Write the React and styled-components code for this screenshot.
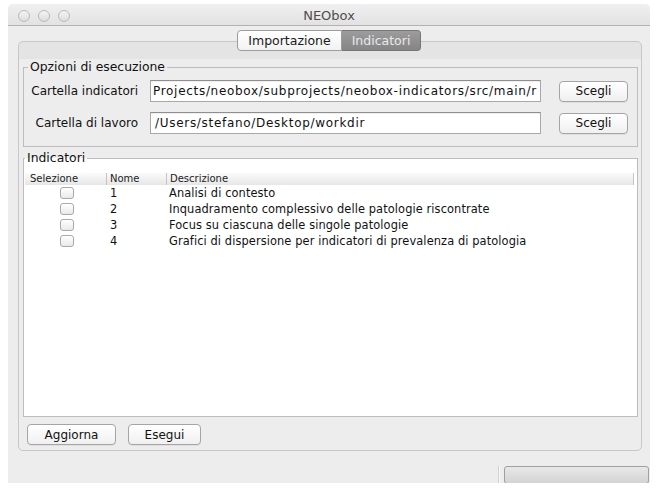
import styled, { createGlobalStyle } from "styled-components";

const GlobalStyle = createGlobalStyle`
  html, body {
    margin: 0;
    background: #fff;
  }
  body {
    font-family: "DejaVu Sans", "Liberation Sans", sans-serif;
    color: #1a1a1a;
  }
`;

const Window = styled.div`
  width: 642px;
  height: 479px;
  margin: 4px 0 0 8px;
  background: #ededed;
  display: flex;
  flex-direction: column;
  border-radius: 5px 5px 0 0;
  overflow: hidden;
`;

const TitleBar = styled.div`
  height: 22px;
  flex-shrink: 0;
  box-sizing: border-box;
  padding: 2px 10px 0;
  display: grid;
  grid-template-columns: 1fr auto 1fr;
  align-items: center;
  background: linear-gradient(#f0f0f0, #e2e2e2);
  border-bottom: 1px solid #b3b3b3;
`;

const Lights = styled.div`
  display: flex;
  gap: 8px;
`;

const Light = styled.span`
  width: 12px;
  height: 12px;
  box-sizing: border-box;
  border-radius: 50%;
  border: 1px solid #b9b9b9;
  background: linear-gradient(#f4f4f4, #dddddd);
`;

const Title = styled.div`
  font-size: 13px;
  color: #4d4d4d;
`;

const TabBar = styled.div`
  display: flex;
  justify-content: center;
  margin-top: 4px;
  position: relative;
  z-index: 1;
`;

const Tab = styled.div`
  height: 21px;
  box-sizing: border-box;
  width: ${(p) => p.$w}px;
  display: flex;
  align-items: center;
  justify-content: center;
  font-size: 12.5px;
  border: 1px solid ${(p) => (p.$active ? "#767676" : "#9d9d9d")};
  border-radius: ${(p) => (p.$first ? "4px 0 0 4px" : "0 4px 4px 0")};
  border-left-width: ${(p) => (p.$first ? 1 : 0)}px;
  background: ${(p) =>
    p.$active
      ? "linear-gradient(#9c9c9c, #858585)"
      : "linear-gradient(#ffffff, #f2f2f2)"};
  color: ${(p) => (p.$active ? "#e9e9e9" : "#1a1a1a")};
`;

const Pane = styled.div`
  margin: -10px 8px 0 10px;
  height: 410px;
  box-sizing: border-box;
  border: 1px solid #c7c7c7;
  border-radius: 5px;
  background: linear-gradient(#e4e4e4 0, #e4e4e4 17px, #ededed 17px);
  padding: 17px 3px 5px 4px;
  display: flex;
  flex-direction: column;
`;

const Group = styled.fieldset`
  margin: 0;
  min-width: 0;
  border: 1px solid #bdbdbd;
  padding: ${(p) => p.$pad};
  background: ${(p) => p.$bg || "transparent"};
  flex: ${(p) => (p.$grow ? 1 : "none")};
  margin-top: ${(p) => p.$top || 0}px;
  display: flex;
  flex-direction: column;
`;

const Legend = styled.legend`
  padding: 0 2px;
  font-size: 12.4px;
  line-height: 16px;
  color: #111;
`;

const Rows = styled.div`
  display: flex;
  flex-direction: column;
  gap: 10px;
`;

const Row = styled.div`
  display: flex;
  align-items: center;
`;

const Label = styled.div`
  width: 110px;
  text-align: right;
  white-space: nowrap;
  font-size: 12px;
  color: #111;
`;

const Field = styled.div`
  width: 391px;
  height: 22px;
  margin-left: 12px;
  box-sizing: border-box;
  border: 1px solid #a8a8a8;
  border-top-color: #8f8f8f;
  background: #fff;
  box-shadow: inset 0 1px 1px rgba(0, 0, 0, 0.07);
  padding: 0 3px 0 4px;
  display: flex;
  align-items: center;
  justify-content: ${(p) => (p.$end ? "flex-end" : "flex-start")};
  overflow: hidden;
  white-space: nowrap;
  font-size: 12px;
  letter-spacing: 0.7px;
  color: #111;

  span {
    flex-shrink: 0;
  }
`;

const Button = styled.button`
  width: ${(p) => p.$w}px;
  height: 21px;
  margin-left: ${(p) => p.$ml || 0}px;
  box-sizing: border-box;
  border: 1px solid #a5a5a5;
  border-radius: 4px;
  background: linear-gradient(#ffffff, #f0f0f0);
  box-shadow: 0 1px 0 rgba(0, 0, 0, 0.05);
  font-family: inherit;
  font-size: 12px;
  color: #111;
  padding: 0;
`;

const Table = styled.div`
  display: flex;
  flex-direction: column;
`;

const cols = "81px 60px 1fr";

const HeadRow = styled.div`
  display: grid;
  grid-template-columns: ${cols};
  height: 12px;
  background: linear-gradient(#fbfbfb, #e6e6e6);
  border-right: 1px solid #c4c4c4;
  font-size: 10px;
  line-height: 12px;
  color: #222;
`;

const HeadCell = styled.div`
  padding-left: ${(p) => p.$pad}px;
  border-left: ${(p) => (p.$sep ? "1px solid #c4c4c4" : "none")};
  white-space: nowrap;
`;

const BodyRow = styled.div`
  display: grid;
  grid-template-columns: ${cols};
  height: 16px;
  align-items: center;
  font-size: 11.4px;
  letter-spacing: 0.1px;
  color: #111;
`;

const Cell = styled.div`
  padding-left: ${(p) => p.$pad || 0}px;
  white-space: nowrap;
  display: flex;
  justify-content: ${(p) => (p.$center ? "center" : "flex-start")};
`;

const Check = styled.span`
  width: 14px;
  height: 12px;
  box-sizing: border-box;
  border: 1px solid #a9a9a9;
  border-radius: 3px;
  background: linear-gradient(#ffffff, #e9e9e9);
`;

const Actions = styled.div`
  display: flex;
  gap: 12px;
  margin: 7px 0 0 4px;
`;

const StatusBar = styled.div`
  flex: 1;
  display: flex;
  justify-content: flex-end;
  align-items: flex-end;
  gap: 5px;
  padding-right: 1px;
`;

const StatusSep = styled.div`
  width: 1px;
  height: 17px;
  background: #d2d2d2;
  box-shadow: 1px 0 0 #f8f8f8;
`;

const Progress = styled.div`
  width: 145px;
  height: 18px;
  margin-bottom: -1px;
  box-sizing: border-box;
  border: 1px solid #a0a0a0;
  border-radius: 3px;
  background: linear-gradient(#e8e8e8, #d3d3d3);
`;

const indicators = [
  { n: "1", d: "Analisi di contesto" },
  { n: "2", d: "Inquadramento complessivo delle patologie riscontrate" },
  { n: "3", d: "Focus su ciascuna delle singole patologie" },
  { n: "4", d: "Grafici di dispersione per indicatori di prevalenza di patologia" },
];

export default function App() {
  return (
    <>
      <GlobalStyle />
      <Window>
        <TitleBar>
          <Lights>
            <Light />
            <Light />
            <Light />
          </Lights>
          <Title>NEObox</Title>
          <div />
        </TitleBar>

        <TabBar>
          <Tab $first $w={105}>Importazione</Tab>
          <Tab $active $w={79}>Indicatori</Tab>
        </TabBar>

        <Pane>
          <Group $pad="5px 2px 12px 4px">
            <Legend>Opzioni di esecuzione</Legend>
            <Rows>
              <Row>
                <Label>Cartella indicatori</Label>
                <Field $end>
                  <span>Projects/neobox/subprojects/neobox-indicators/src/main/r</span>
                </Field>
                <Button $w={69} $ml={18}>Scegli</Button>
              </Row>
              <Row>
                <Label>Cartella di lavoro</Label>
                <Field>
                  <span>/Users/stefano/Desktop/workdir</span>
                </Field>
                <Button $w={69} $ml={18}>Scegli</Button>
              </Row>
            </Rows>
          </Group>

          <Group $pad="7px 3px 0 1px" $bg="#fff" $grow $top={3}>
            <Legend>Indicatori</Legend>
            <Table>
              <HeadRow>
                <HeadCell $pad={5}>Selezione</HeadCell>
                <HeadCell $pad={3} $sep>Nome</HeadCell>
                <HeadCell $pad={3} $sep>Descrizione</HeadCell>
              </HeadRow>
              {indicators.map((it) => (
                <BodyRow key={it.n}>
                  <Cell $center $pad={3}>
                    <Check />
                  </Cell>
                  <Cell $pad={4}>{it.n}</Cell>
                  <Cell $pad={3}>{it.d}</Cell>
                </BodyRow>
              ))}
            </Table>
          </Group>

          <Actions>
            <Button $w={89}>Aggiorna</Button>
            <Button $w={73}>Esegui</Button>
          </Actions>
        </Pane>

        <StatusBar>
          <StatusSep />
          <Progress />
        </StatusBar>
      </Window>
    </>
  );
}
